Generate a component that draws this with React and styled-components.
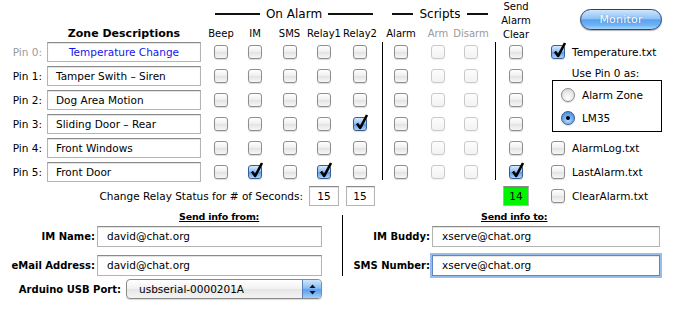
import styled, { createGlobalStyle } from "styled-components";

const GlobalStyle = createGlobalStyle`
  html, body {
    margin: 0;
    padding: 0;
    background: #fff;
  }
  body {
    font-family: "DejaVu Sans", Verdana, sans-serif;
    font-size: 10.5px;
    color: #000;
  }
`;

const ON_ALARM = ["Beep", "IM", "SMS", "Relay1", "Relay2"];
const SCRIPTS = [
	{ name: "Alarm" },
	{ name: "Arm", off: true },
	{ name: "Disarm", off: true },
];
const ALARM_COLS = [3, 4, 5, 6, 7];
const SCRIPT_COLS = [9, 10, 11];
const CLEAR_COL = 13;
const SIDE_COL = 15;

const PINS = [
	{ label: "Pin 0:", zone: "Temperature Change", pin0: true, alarm: [0, 0, 0, 0, 0], clear: false },
	{ label: "Pin 1:", zone: "Tamper Swith – Siren", alarm: [0, 0, 0, 0, 0], clear: false },
	{ label: "Pin 2:", zone: "Dog Area Motion", alarm: [0, 0, 0, 0, 0], clear: false },
	{ label: "Pin 3:", zone: "Sliding Door – Rear", alarm: [0, 0, 0, 0, 1], clear: false },
	{ label: "Pin 4:", zone: "Front Windows", alarm: [0, 0, 0, 0, 0], clear: false },
	{ label: "Pin 5:", zone: "Front Door", alarm: [0, 1, 0, 1, 0], clear: true },
];

function CheckBox({ checked, disabled }) {
	return (
		<Box $checked={checked} $disabled={disabled}>
			{checked && (
				<Tick width="18" height="20" viewBox="0 0 18 20">
					<path d="M4 11.5 L7.2 16 L14 3" fill="none" stroke="#000" strokeWidth="2.6" strokeLinejoin="round" />
				</Tick>
			)}
		</Box>
	);
}

function Radio({ selected }) {
	return <RadioDot $selected={selected} />;
}

function FileOption({ row, checked, children }) {
	return (
		<SideOption $row={row}>
			<CheckBox checked={checked} />
			<span>{children}</span>
		</SideOption>
	);
}

function App() {
	return (
		<Page>
			<GlobalStyle />
			<TopGrid>
				<Group $cols="3 / 8" $left={11} $right={6}>
					On Alarm
				</Group>
				<Group $cols="9 / 12" $left={7} $right={-5}>
					Scripts
				</Group>
				<ClearHead>
					<span>Send</span>
					<span>Alarm</span>
					<span>Clear</span>
				</ClearHead>
				<MonitorButton>Monitor</MonitorButton>

				<ZoneHead>Zone Descriptions</ZoneHead>
				{ON_ALARM.map((name, i) => (
					<ColHead key={name} $col={ALARM_COLS[i]}>
						{name}
					</ColHead>
				))}
				{SCRIPTS.map((s, i) => (
					<ColHead key={s.name} $col={SCRIPT_COLS[i]} $muted={s.off}>
						{s.name}
					</ColHead>
				))}

				{PINS.map((pin, r) => {
					const row = r + 3;
					return [
						<PinLabel key={`l${r}`} $row={row} $muted={pin.pin0}>
							{pin.label}
						</PinLabel>,
						<ZoneField key={`f${r}`} $row={row} $pin0={pin.pin0}>
							{pin.zone}
						</ZoneField>,
						...pin.alarm.map((on, c) => (
							<CheckCell key={`a${r}${c}`} $row={row} $col={ALARM_COLS[c]}>
								<CheckBox checked={!!on} />
							</CheckCell>
						)),
						...SCRIPTS.map((s, c) => (
							<CheckCell key={`s${r}${c}`} $row={row} $col={SCRIPT_COLS[c]}>
								<CheckBox disabled={s.off} />
							</CheckCell>
						)),
						<CheckCell key={`c${r}`} $row={row} $col={CLEAR_COL}>
							<CheckBox checked={pin.clear} />
						</CheckCell>,
					];
				})}

				<Divider $col={8} />
				<Divider $col={12} />

				<FileOption row={3} checked>
					Temperature.txt
				</FileOption>
				<Pin0Panel>
					<Pin0Title>Use Pin 0 as:</Pin0Title>
					<Pin0Box>
						<RadioRow>
							<Radio />
							<span>Alarm Zone</span>
						</RadioRow>
						<RadioRow>
							<Radio selected />
							<span>LM35</span>
						</RadioRow>
					</Pin0Box>
				</Pin0Panel>
				<FileOption row={7}>AlarmLog.txt</FileOption>
				<FileOption row={8}>LastAlarm.txt</FileOption>
				<FileOption row={9}>ClearAlarm.txt</FileOption>

				<RelayText>Change Relay Status for # of Seconds:</RelayText>
				<CheckCell $row={9} $col={6}>
					<SecondsField $w={30}>15</SecondsField>
				</CheckCell>
				<CheckCell $row={9} $col={7}>
					<SecondsField $w={29}>15</SecondsField>
				</CheckCell>
				<CheckCell $row={9} $col={CLEAR_COL}>
					<SecondsField $w={26} $live>
						14
					</SecondsField>
				</CheckCell>
			</TopGrid>

			<Bottom>
				<FromPanel>
					<PanelTitle $indent={179}>Send info from:</PanelTitle>
					<FormRow $top={2}>
						<FieldLabel>IM Name:</FieldLabel>
						<TextField $w={225}>david@chat.org</TextField>
					</FormRow>
					<FormRow $top={8}>
						<FieldLabel>eMail Address:</FieldLabel>
						<TextField $w={225}>david@chat.org</TextField>
					</FormRow>
					<FormRow $top={3}>
						<FieldLabel $gap={5}>Arduino USB Port:</FieldLabel>
						<Select>
							<SelectValue>usbserial-0000201A</SelectValue>
							<SelectArrows>
								<svg width="7" height="11" viewBox="0 0 7 11">
									<path d="M3.5 0.5 L6.5 4 L0.5 4 Z" fill="#111" />
									<path d="M3.5 10.5 L6.5 7 L0.5 7 Z" fill="#111" />
								</svg>
							</SelectArrows>
						</Select>
					</FormRow>
				</FromPanel>
				<ToPanel>
					<PanelTitle $indent={138} $lift>
						Send info to:
					</PanelTitle>
					<FormRow $top={2}>
						<FieldLabel>IM Buddy:</FieldLabel>
						<TextField $w={228}>xserve@chat.org</TextField>
					</FormRow>
					<FormRow $top={8}>
						<FieldLabel>SMS Number:</FieldLabel>
						<TextField $w={228} $focus>
							xserve@chat.org
						</TextField>
					</FormRow>
				</ToPanel>
			</Bottom>
		</Page>
	);
}

const Page = styled.div`
	width: 674px;
	height: 310px;
	overflow: hidden;
	position: relative;
`;

const TopGrid = styled.div`
	display: grid;
	grid-template-columns: 47px 157px 34px 34px 35px 34px 38px 6px 32px 42px 24px 24px 18px 26px 112px;
	grid-template-rows: 25px 17px repeat(7, 24px);
`;

const Group = styled.div`
	grid-column: ${(p) => p.$cols};
	grid-row: 1;
	margin-left: ${(p) => p.$left}px;
	margin-right: ${(p) => p.$right}px;
	padding-top: 3px;

	display: flex;
	align-items: center;
	gap: 6px;

	font-size: 12px;
	white-space: nowrap;

	&::before,
	&::after {
		content: "";
		flex: 1;
		height: 2px;
		background: #111;
	}
`;

const ClearHead = styled.div`
	grid-column: ${CLEAR_COL};
	grid-row: 1 / 3;

	display: flex;
	flex-direction: column;
	align-items: center;

	font-size: 10px;
	line-height: 14px;
	white-space: nowrap;
`;

const MonitorButton = styled.div`
	grid-column: ${SIDE_COL};
	grid-row: 1 / 3;
	align-self: start;
	justify-self: end;
	width: 82px;
	height: 21px;
	margin-top: 9px;
	margin-right: 1px;
	box-sizing: border-box;

	display: flex;
	align-items: center;
	justify-content: center;

	border: 1px solid #26407a;
	border-radius: 11px;
	background: linear-gradient(#cfe6fd 0%, #8fc2f6 45%, #5aa1ee 52%, #6fb3f6 80%, #a6d7fd 100%);
	box-shadow: 0 1px 1px rgba(0, 0, 0, 0.3);

	color: #fff;
	font-size: 11px;
	letter-spacing: 0.2px;
	text-shadow: 0 0 1px rgba(40, 80, 150, 0.6);
`;

const ZoneHead = styled.div`
	grid-column: 2;
	grid-row: 2;
	padding-right: 3px;
	align-self: center;
	text-align: center;

	font-size: 11px;
	font-weight: bold;
`;

const ColHead = styled.div`
	grid-column: ${(p) => p.$col};
	grid-row: 2;

	display: flex;
	align-items: center;
	justify-content: center;

	font-size: 10px;
	white-space: nowrap;
	color: ${(p) => (p.$muted ? "#9a9a9a" : "#000")};
`;

const PinLabel = styled.div`
	grid-column: 1;
	grid-row: ${(p) => p.$row};
	height: 20px;
	padding-right: 5px;

	line-height: 20px;
	text-align: right;
	color: ${(p) => (p.$muted ? "#9a9a9a" : "#000")};
`;

const fieldLook = `
	box-sizing: border-box;
	height: 20px;
	background: #fff;
	border: 1px solid #b4b4b4;
	border-top-color: #8a8a8a;
	box-shadow: inset 0 1px 1px rgba(0, 0, 0, 0.12);
	white-space: nowrap;
	overflow: hidden;
`;

const ZoneField = styled.div`
	${fieldLook}
	grid-column: 2;
	grid-row: ${(p) => p.$row};
	width: 154px;
	padding: 0 8px;

	line-height: 18px;
	text-align: ${(p) => (p.$pin0 ? "center" : "left")};
	color: ${(p) => (p.$pin0 ? "#1515ee" : "#000")};
`;

const CheckCell = styled.div`
	grid-column: ${(p) => p.$col};
	grid-row: ${(p) => p.$row};
	height: 20px;

	display: flex;
	align-items: center;
	justify-content: center;
`;

const Box = styled.span`
	position: relative;
	flex: none;
	display: inline-block;
	width: 14px;
	height: 14px;
	box-sizing: border-box;

	border-radius: 3px;
	border: 1px solid ${(p) => (p.$checked ? "#3b5c92" : p.$disabled ? "#cacaca" : "#8e8e8e")};
	background: ${(p) =>
		p.$checked
			? "linear-gradient(#d6eafd, #92c2f4 45%, #5e9ee8 55%, #a9d5fb)"
			: p.$disabled
			? "linear-gradient(#fdfdfd, #f2f2f2)"
			: "linear-gradient(#ffffff, #eeeeee 50%, #e3e3e3 52%, #f6f6f6)"};
	box-shadow: 0 1px 1px rgba(0, 0, 0, ${(p) => (p.$disabled ? 0.05 : 0.14)});
`;

const Tick = styled.svg`
	position: absolute;
	left: -1px;
	top: -6px;
	overflow: visible;
`;

const Divider = styled.div`
	grid-column: ${(p) => p.$col};
	grid-row: 3 / 9;
	justify-self: center;
	width: 1px;
	margin-bottom: 6px;
	background: #000;
`;

const SideOption = styled.div`
	grid-column: ${SIDE_COL};
	grid-row: ${(p) => p.$row};
	height: 20px;

	display: flex;
	align-items: center;
	gap: 7px;

	white-space: nowrap;
`;

const Pin0Panel = styled.div`
	grid-column: ${SIDE_COL};
	grid-row: 4 / 7;
	display: flex;
	flex-direction: column;
`;

const Pin0Title = styled.div`
	height: 14px;
	line-height: 14px;
	text-align: center;
	padding-right: 3px;
`;

const Pin0Box = styled.div`
	width: 110px;
	height: 52px;
	margin-left: 1px;
	box-sizing: border-box;
	padding: 2px 0 0 8px;
	border: 1px solid #000;
`;

const RadioRow = styled.div`
	height: 23px;
	display: flex;
	align-items: center;
	gap: 7px;
`;

const RadioDot = styled.span`
	position: relative;
	width: 14px;
	height: 14px;
	box-sizing: border-box;
	border-radius: 50%;
	border: 1px solid ${(p) => (p.$selected ? "#3b5c92" : "#8a8a8a")};
	background: ${(p) =>
		p.$selected
			? "radial-gradient(circle at 50% 70%, #b6dcfd, #5d9eea 60%, #3f7fd6)"
			: "radial-gradient(circle at 50% 75%, #ffffff, #e6e6e6 60%, #d2d2d2)"};
	box-shadow: 0 1px 1px rgba(0, 0, 0, 0.15);

	&::after {
		content: "";
		display: ${(p) => (p.$selected ? "block" : "none")};
		position: absolute;
		left: 4px;
		top: 4px;
		width: 4px;
		height: 4px;
		border-radius: 50%;
		background: #000;
	}
`;

const RelayText = styled.div`
	grid-column: 1 / 6;
	grid-row: 9;
	height: 20px;
	padding-right: 4px;

	line-height: 20px;
	text-align: right;
	white-space: nowrap;
`;

const SecondsField = styled.div`
	${fieldLook}
	flex: none;
	width: ${(p) => p.$w}px;

	line-height: 18px;
	text-align: center;
	background: ${(p) => (p.$live ? "#00f500" : "#fff")};
`;

const Bottom = styled.div`
	display: flex;
	align-items: flex-start;
`;

const FromPanel = styled.div`
	width: 342px;
	padding-right: 20px;
	box-sizing: border-box;
	display: flex;
	flex-direction: column;
`;

const ToPanel = styled.div`
	width: 332px;
	margin-top: 5px;
	padding-right: 14px;
	box-sizing: border-box;
	border-left: 1px solid #000;
	display: flex;
	flex-direction: column;
`;

const PanelTitle = styled.div`
	height: 14px;
	margin-top: ${(p) => (p.$lift ? -5 : 0)}px;
	padding-left: ${(p) => p.$indent}px;

	line-height: 14px;
	font-size: 9.5px;
	font-weight: bold;
	letter-spacing: -0.2px;
	text-decoration: underline;
	white-space: nowrap;
`;

const FormRow = styled.div`
	margin-top: ${(p) => p.$top}px;
	display: flex;
	align-items: center;
	justify-content: flex-end;
`;

const FieldLabel = styled.span`
	margin-right: ${(p) => p.$gap ?? 2}px;
	font-size: 10px;
	font-weight: bold;
	white-space: nowrap;
`;

const TextField = styled.div`
	${fieldLook}
	width: ${(p) => p.$w}px;
	height: 21px;
	padding-left: 9px;
	line-height: 19px;

	${(p) =>
		p.$focus &&
		`
		border: 1px solid #5d86c4;
		box-shadow: 0 0 0 2px #97bde9, inset 0 1px 1px rgba(0, 0, 0, 0.1);
	`}
`;

const Select = styled.div`
	width: 196px;
	height: 20px;
	box-sizing: border-box;
	display: flex;

	border: 1px solid #8a8a8a;
	border-radius: 4px;
	overflow: hidden;
	background: linear-gradient(#ffffff, #f1f1f1 50%, #e6e6e6 52%, #f4f4f4);
	box-shadow: 0 1px 1px rgba(0, 0, 0, 0.15);
`;

const SelectValue = styled.span`
	flex: 1;
	padding-left: 12px;
	line-height: 18px;
`;

const SelectArrows = styled.span`
	width: 18px;
	display: flex;
	align-items: center;
	justify-content: center;
	border-left: 1px solid #5b80b9;
	background: linear-gradient(#cfe6fd, #88bdf5 45%, #5a9eec 55%, #9fd0fb);
`;

export default App;
